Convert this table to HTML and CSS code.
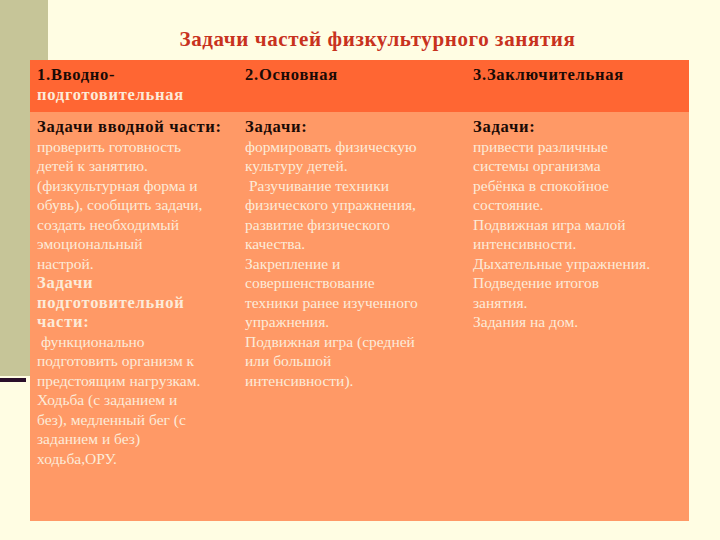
FILE: index.html
```html
<!DOCTYPE html>
<html lang="ru">
<head>
<meta charset="utf-8">
<title>Задачи частей физкультурного занятия</title>
<link rel="stylesheet" href="styles.css">
</head>
<body>
<div class="slide">
  <h1 class="title">Задачи частей физкультурного занятия</h1>
  <table class="tasks">
    <colgroup>
      <col class="c1"><col class="c2"><col class="c3">
    </colgroup>
    <thead>
      <tr>
        <th><span class="dark">1.Вводно-</span><br><span class="light">подготовительная</span></th>
        <th><span class="dark">2.Основная</span></th>
        <th><span class="dark">3.Заключительная</span></th>
      </tr>
    </thead>
    <tbody>
      <tr>
        <td><b class="dark">Задачи вводной части:</b><br>проверить готовность<br>детей к занятию.<br>(физкультурная форма и<br>обувь), сообщить задачи,<br>создать необходимый<br>эмоциональный<br>настрой.<br><b>Задачи<br>подготовительной<br>части:</b><br>&nbsp;функционально<br>подготовить организм к<br>предстоящим нагрузкам.<br>Ходьба (с заданием и<br>без), медленный бег (с<br>заданием и без)<br>ходьба,ОРУ.</td>
        <td><b class="dark">Задачи:</b><br>формировать физическую<br>культуру детей.<br>&nbsp;Разучивание техники<br>физического упражнения,<br>развитие физического<br>качества.<br>Закрепление и<br>совершенствование<br>техники ранее изученного<br>упражнения.<br>Подвижная игра (средней<br>или большой<br>интенсивности).</td>
        <td><b class="dark">Задачи:</b><br>привести различные<br>системы организма<br>ребёнка в спокойное<br>состояние.<br>Подвижная игра малой<br>интенсивности.<br>Дыхательные упражнения.<br>Подведение итогов<br>занятия.<br>Задания на дом.</td>
      </tr>
    </tbody>
  </table>
</div>
</body>
</html>
```

FILE: styles.css
```css
html, body {
  margin: 0;
  padding: 0;
}
body {
  background: #fffde3;
  font-family: "Liberation Serif", "Times New Roman", serif;
}
.slide {
  width: 720px;
  height: 540px;
  overflow: hidden;
  background-color: #fffde3;
  background-image:
    linear-gradient(#c6c598, #c6c598),
    linear-gradient(#2a0f2a, #2a0f2a);
  background-size: 48px 376px, 26px 4px;
  background-position: 0 0, 0 378px;
  background-repeat: no-repeat;
  padding-top: 28px;
  box-sizing: border-box;
}
.title {
  margin: 0 0 0 48px;
  width: 659px;
  height: 32px;
  text-align: center;
  font-size: 21px;
  letter-spacing: 0.6px;
  line-height: 22px;
  font-weight: bold;
  color: #c8321e;
}
.tasks {
  margin-left: 30px;
  width: 659px;
  height: 461px;
  border-collapse: collapse;
  table-layout: fixed;
  font-size: 15.5px;
  line-height: 19.5px;
  color: #fcebd9;
}
.c1 { width: 208px; }
.c2 { width: 228px; }
.c3 { width: 223px; }
.tasks th {
  background: #ff6633;
  text-align: left;
  vertical-align: top;
  height: 52px;
  padding: 5px 4px 0 7px;
  box-sizing: border-box;
  font-weight: bold;
  font-size: 16.5px;
  letter-spacing: 0.75px;
  white-space: nowrap;
}
.tasks td {
  background: #ff9966;
  vertical-align: top;
  padding: 5px 4px 0 7px;
  white-space: nowrap;
}
.tasks td b {
  font-size: 16.5px;
  letter-spacing: 0.75px;
}
.dark {
  color: #1a0a05;
}
.light {
  color: #fcebd9;
}
```
